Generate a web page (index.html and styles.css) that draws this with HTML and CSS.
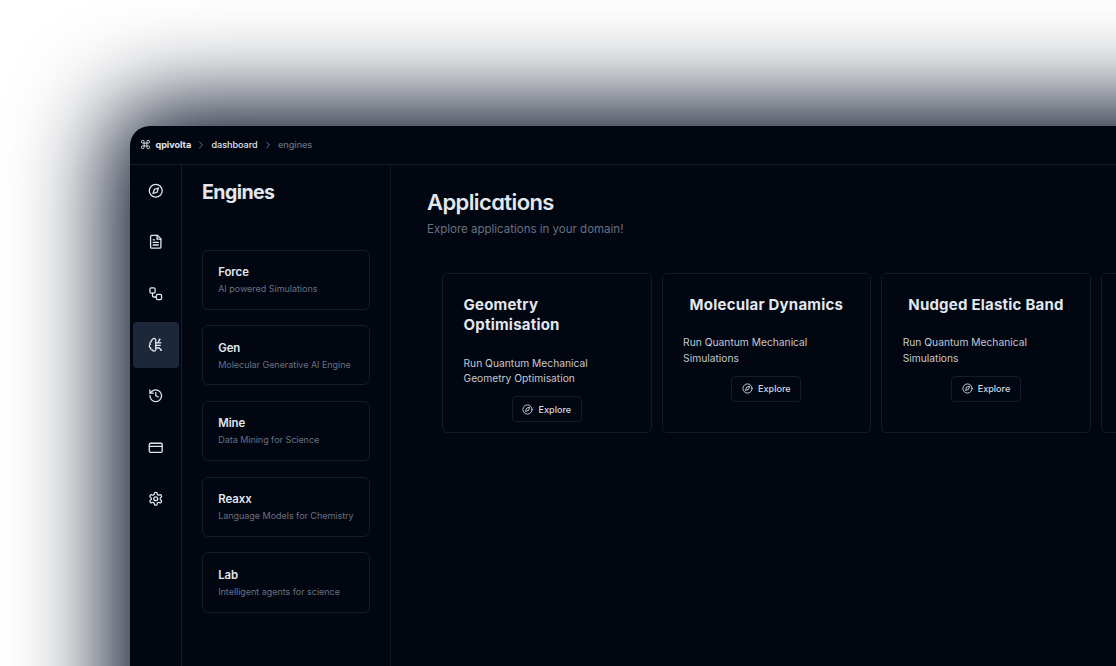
FILE: index.html
```html
<!DOCTYPE html>
<html lang="en">
<head>
<meta charset="utf-8">
<title>qpivolta – engines</title>
<link rel="stylesheet" href="styles.css">
</head>
<body>
<svg class="sprite" xmlns="http://www.w3.org/2000/svg">
  <symbol id="compass" viewBox="0 0 24 24"><circle cx="12" cy="12" r="10"/><path d="m16.24 7.76-2.12 6.36-6.36 2.12 2.12-6.36z"/></symbol>
  <symbol id="chevron" viewBox="0 0 24 24"><path d="m9 18 6-6-6-6"/></symbol>
</svg>
<div class="window">
  <header class="topbar">
    <svg class="icon command" viewBox="0 0 24 24"><path d="M18 3a3 3 0 0 0-3 3v12a3 3 0 1 0 3-3H6a3 3 0 1 0 3 3V6a3 3 0 1 0-3 3h12a3 3 0 0 0 0-6"/></svg>
    <span class="brand">qpivolta</span>
    <svg class="icon chevron"><use href="#chevron"/></svg>
    <span class="crumb">dashboard</span>
    <svg class="icon chevron"><use href="#chevron"/></svg>
    <span class="crumb current">engines</span>
  </header>
  <div class="body">
    <nav class="rail">
      <a class="rail-item"><svg class="icon"><use href="#compass"/></svg></a>
      <a class="rail-item"><svg class="icon" viewBox="0 0 24 24"><path d="M14.500 2H6a2 2 0 0 0-2 2v16a2 2 0 0 0 2 2h12a2 2 0 0 0 2-2V7.500L14.500 2z"/><path d="M14 2v6h6"/><path d="M10 9H8M16 13H8M16 17H8"/></svg></a>
      <a class="rail-item"><svg class="icon" viewBox="0 0 24 24"><rect width="8" height="8" x="3" y="3" rx="2"/><path d="M7 11v4a2 2 0 0 0 2 2h4"/><rect width="8" height="8" x="13" y="13" rx="2"/></svg></a>
      <a class="rail-item active"><svg class="icon" viewBox="0 0 24 24"><path d="M12 4.500a2.500 2.500 0 0 0-4.960-.46 2.500 2.500 0 0 0-1.980 3 2.500 2.500 0 0 0-1.320 4.240 3 3 0 0 0 .34 5.580 2.500 2.500 0 0 0 2.960 3.080A2.500 2.500 0 0 0 12 19.500z"/><path d="M12 9h3.500L18 4M15.500 9H20M12 13h7M12 17h5.500l2.500 3"/><circle cx="18" cy="4" r=".5"/><circle cx="20" cy="20" r=".5"/></svg></a>
      <a class="rail-item"><svg class="icon" viewBox="0 0 24 24"><path d="M3 12a9 9 0 1 0 9-9 9.750 9.750 0 0 0-6.740 2.740L3 8"/><path d="M3 3v5h5"/><path d="M12 7v5l4 2"/></svg></a>
      <a class="rail-item"><svg class="icon" viewBox="0 0 24 24"><rect width="20" height="14" x="2" y="5" rx="2"/><path d="M2 10h20"/></svg></a>
      <a class="rail-item"><svg class="icon" viewBox="0 0 24 24"><path d="M12.220 2h-.44a2 2 0 0 0-2 2v.18a2 2 0 0 1-1 1.730l-.43.250a2 2 0 0 1-2 0l-.15-.08a2 2 0 0 0-2.730.730l-.22.380a2 2 0 0 0 .730 2.730l.15.100a2 2 0 0 1 1 1.720v.510a2 2 0 0 1-1 1.740l-.15.090a2 2 0 0 0-.730 2.730l.22.380a2 2 0 0 0 2.730.730l.15-.08a2 2 0 0 1 2 0l.43.250a2 2 0 0 1 1 1.730V20a2 2 0 0 0 2 2h.44a2 2 0 0 0 2-2v-.18a2 2 0 0 1 1-1.730l.43-.25a2 2 0 0 1 2 0l.15.080a2 2 0 0 0 2.730-.730l.22-.39a2 2 0 0 0-.730-2.730l-.15-.08a2 2 0 0 1-1-1.740v-.5a2 2 0 0 1 1-1.740l.15-.09a2 2 0 0 0 .730-2.730l-.22-.38a2 2 0 0 0-2.730-.730l-.15.080a2 2 0 0 1-2 0l-.43-.25a2 2 0 0 1-1-1.730V4a2 2 0 0 0-2-2z"/><circle cx="12" cy="12" r="3"/></svg></a>
    </nav>
    <aside class="engines">
      <h2 class="engines-title">Engines</h2>
      <div class="engine-list">
        <div class="engine"><h3>Force</h3><p>AI powered Simulations</p></div>
        <div class="engine"><h3>Gen</h3><p>Molecular Generative AI Engine</p></div>
        <div class="engine"><h3>Mine</h3><p>Data Mining for Science</p></div>
        <div class="engine"><h3>Reaxx</h3><p>Language Models for Chemistry</p></div>
        <div class="engine"><h3>Lab</h3><p>Intelligent agents for science</p></div>
      </div>
    </aside>
    <main class="main">
      <h1 class="page-title">Applications</h1>
      <p class="subtitle">Explore applications in your domain!</p>
      <div class="apps">
        <article class="app"><h3>Geometry<br>Optimisation</h3><p>Run Quantum Mechanical<br>Geometry Optimisation</p><button class="explore"><svg class="icon"><use href="#compass"/></svg>Explore</button></article>
        <article class="app"><h3>Molecular Dynamics</h3><p>Run Quantum Mechanical<br>Simulations</p><button class="explore"><svg class="icon"><use href="#compass"/></svg>Explore</button></article>
        <article class="app"><h3>Nudged Elastic Band</h3><p>Run Quantum Mechanical<br>Simulations</p><button class="explore"><svg class="icon"><use href="#compass"/></svg>Explore</button></article>
        <article class="app"></article>
      </div>
    </main>
  </div>
</div>
</body>
</html>
```
FILE: styles.css
```css
* { box-sizing: border-box; margin: 0; }
body {
  height: 666px;
  padding: 126px 0 0 130px;
  overflow: hidden;
  background: #fff;
  color: #e1e7ef;
  font-family: Inter, "Liberation Sans", sans-serif;
  font-optical-sizing: none;
  font-variation-settings: "opsz" 14;
}
.sprite { display: none; }
.icon {
  flex: none;
  width: 15.500px;
  height: 15.500px;
  fill: none;
  stroke: currentColor;
  stroke-width: 2;
  stroke-linecap: round;
  stroke-linejoin: round;
}
.window {
  display: flex;
  flex-direction: column;
  width: 1300px;
  height: 900px;
  border-radius: 20px;
  background: #020610;
  box-shadow: 0 0 96px 20px #030d22;
}
.topbar {
  display: flex;
  flex: none;
  align-items: center;
  height: 39px;
  padding: 0 0 1px 9.500px;
  border-bottom: 1px solid #131c2b;
  font-size: 9.100px;
  font-weight: 500;
}
.command { width: 11px; height: 11px; margin-right: 5px; }
.brand { width: 36px; font-weight: 700; letter-spacing: -0.050px; }
.chevron { width: 12px; height: 12px; margin: 0 4.500px 0 3.500px; color: #6c7583; }
.crumb { width: 46.500px; letter-spacing: -0.050px; }
.current { color: #69717e; }
.body { display: flex; flex: 1; }
.rail {
  display: flex;
  flex-direction: column;
  gap: 5.100px;
  width: 52px;
  padding: 2.500px 2.500px 0 2.500px;
  border-right: 1px solid #171e2b;
}
.rail-item {
  display: flex;
  flex: none;
  align-items: center;
  justify-content: center;
  width: 46.300px;
  height: 46.300px;
  border-radius: 4px;
}
.active { background: #1c2739; }
.engines {
  width: 209px;
  padding: 14px 20px 0;
  border-right: 1px solid #0f1622;
}
.engines-title {
  font-size: 19.600px;
  font-weight: 650;
  line-height: 27px;
  letter-spacing: -0.600px;
}
.engine-list { display: grid; gap: 15.400px; padding-top: 43.500px; }
.engine {
  width: 168px;
  height: 60.300px;
  padding: 13.400px 15.200px;
  border: 1px solid #151c29;
  border-radius: 6px;
}
.engine h3 { font-size: 11.400px; font-weight: 620; line-height: 17px; letter-spacing: -0.050px; }
.engine p {
  color: #667183;
  font-size: 9px;
  line-height: 15px;
  letter-spacing: -0.030px;
  white-space: nowrap;
}
.main { flex: 1; padding: 22px 0 0 36px; }
.page-title {
  font-size: 22px;
  font-weight: 620;
  line-height: 30px;
  letter-spacing: -0.600px;
  font-feature-settings: "cv11";
}
.subtitle {
  padding-top: 2.500px;
  color: #667183;
  font-size: 11.500px;
  line-height: 19px;
}
.apps { display: flex; gap: 10px; padding: 34.500px 0 0 15px; }
.app {
  display: flex;
  flex: none;
  flex-direction: column;
  align-items: center;
  width: 209.600px;
  height: 160.300px;
  padding: 20.800px 20.500px;
  border: 1px solid #121a27;
  border-radius: 5px;
}
.app h3 {
  font-size: 15px;
  font-weight: 700;
  line-height: 20.600px;
  letter-spacing: 0.220px;
  white-space: nowrap;
}
.app:first-child h3 { align-self: flex-start; }
.app p {
  align-self: flex-start;
  padding-top: 20px;
  color: #c2c8d1;
  font-size: 10.250px;
  line-height: 15.400px;
}
.explore {
  display: flex;
  flex: none;
  align-items: center;
  justify-content: center;
  gap: 5px;
  width: 70px;
  height: 26px;
  margin-top: 9.600px;
  padding: 0;
  border: 1px solid #131c2b;
  border-radius: 4px;
  background: transparent;
  color: #d2d8e0;
  font-family: inherit;
  font-size: 9.100px;
  font-weight: 500;
}
.explore .icon { width: 11px; height: 11px; }
```
